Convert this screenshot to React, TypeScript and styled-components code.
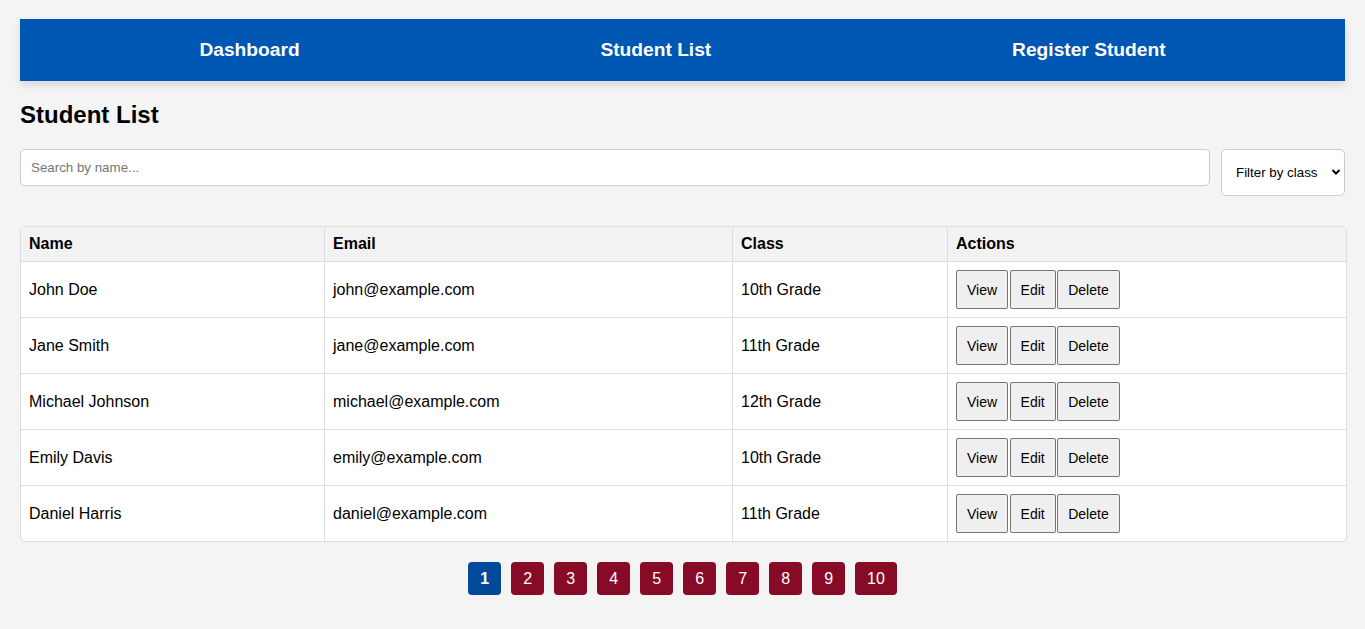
import React from "react";
import styled, { createGlobalStyle } from "styled-components";

const GlobalStyle = createGlobalStyle`
  html, body {
    margin: 0;
    padding: 0;
    background: #f4f4f4;
    font-family: "Liberation Sans", Arial, sans-serif;
    color: #000;
  }
`;

const Page = styled.div`
  padding: 19px 20px 20px;
`;

const Nav = styled.nav`
  display: flex;
  justify-content: space-around;
  align-items: center;
  background: #0056b3;
  padding: 20px 29px;
  box-shadow: 0 4px 8px rgba(0, 0, 0, 0.12);
`;

const NavLink = styled.a`
  color: #fff;
  font-weight: bold;
  font-size: 19.2px;
  line-height: 22px;
  text-decoration: none;
  cursor: pointer;
`;

const Title = styled.h2`
  font-size: 24px;
  font-weight: bold;
  margin: 20px 0 20px;
  line-height: 28px;
`;

const Filters = styled.div`
  display: flex;
  align-items: flex-start;
  gap: 11px;
  margin-bottom: 30px;
`;

const SearchInput = styled.input`
  flex: 1;
  box-sizing: border-box;
  height: 37px;
  padding: 10px;
  border: 1px solid #ccc;
  border-radius: 5px;
  font-family: "Liberation Sans", Arial, sans-serif;
  font-size: 13.33px;
  background: #fff;
  outline: none;
  &::placeholder {
    color: #757575;
  }
`;

const SelectWrap = styled.div`
  position: relative;
  width: 124px;
  height: 47px;
`;

const Select = styled.select`
  appearance: none;
  box-sizing: border-box;
  width: 124px;
  height: 47px;
  padding: 0 20px 0 14px;
  border: 1px solid #ccc;
  border-radius: 5px;
  background: #fff;
  font-family: "Liberation Sans", Arial, sans-serif;
  font-size: 13.33px;
  color: #000;
  outline: none;
`;

const Chevron = styled.svg`
  position: absolute;
  right: 4px;
  top: 19px;
  pointer-events: none;
`;

const Table = styled.table`
  width: 100%;
  box-sizing: border-box;
  table-layout: fixed;
  border-collapse: separate;
  border-spacing: 0;
  border: 1px solid #ddd;
  border-radius: 5px;
  overflow: hidden;
  background: #fff;
`;

const Th = styled.th`
  background: #f2f2f2;
  text-align: left;
  font-weight: bold;
  font-size: 16px;
  line-height: 18px;
  padding: 8px;
  border-right: 1px solid #ddd;
  border-bottom: 1px solid #ddd;
  &:last-child {
    border-right: none;
  }
`;

const Td = styled.td`
  font-size: 16px;
  line-height: 18px;
  padding: 8px;
  border-right: 1px solid #ddd;
  border-bottom: 1px solid #ddd;
  vertical-align: middle;
  &:last-child {
    border-right: none;
  }
  tr:last-child > & {
    border-bottom: none;
  }
`;

const Actions = styled.div`
  display: flex;
  gap: 1.5px;
`;

const ActionButton = styled.button`
  box-sizing: border-box;
  height: 39px;
  padding: 0 10px;
  border: 1px solid #767676;
  border-radius: 2px;
  background: #efefef;
  font-family: "Liberation Sans", Arial, sans-serif;
  font-size: 14px;
  color: #000;
  cursor: pointer;
`;

const Pagination = styled.div`
  display: flex;
  justify-content: center;
  gap: 10px;
  margin-top: 20px;
`;

const PageButton = styled.button<{ $active?: boolean }>`
  height: 33px;
  min-width: 33px;
  padding: 0 12px;
  border: none;
  border-radius: 4px;
  background: ${(p) => (p.$active ? "#004a99" : "#870b26")};
  color: #fff;
  font-family: "Liberation Sans", Arial, sans-serif;
  font-size: 16px;
  font-weight: ${(p) => (p.$active ? "bold" : "normal")};
  cursor: pointer;
`;

const students = [
  { name: "John Doe", email: "john@example.com", cls: "10th Grade" },
  { name: "Jane Smith", email: "jane@example.com", cls: "11th Grade" },
  { name: "Michael Johnson", email: "michael@example.com", cls: "12th Grade" },
  { name: "Emily Davis", email: "emily@example.com", cls: "10th Grade" },
  { name: "Daniel Harris", email: "daniel@example.com", cls: "11th Grade" },
];

export default function App() {
  return (
    <>
      <GlobalStyle />
      <Page>
        <Nav>
          <NavLink>Dashboard</NavLink>
          <NavLink>Student List</NavLink>
          <NavLink>Register Student</NavLink>
        </Nav>
        <Title>Student List</Title>
        <Filters>
          <SearchInput placeholder="Search by name..." />
          <SelectWrap>
            <Select defaultValue="">
              <option value="">Filter by class</option>
              <option value="10">10th Grade</option>
              <option value="11">11th Grade</option>
              <option value="12">12th Grade</option>
            </Select>
            <Chevron width="10" height="8" viewBox="0 0 10 8">
              <path d="M1.5 2 L5 5.5 L8.5 2" fill="none" stroke="#000" strokeWidth="2" />
            </Chevron>
          </SelectWrap>
        </Filters>
        <Table>
          <colgroup>
            <col style={{ width: 304 }} />
            <col style={{ width: 408 }} />
            <col style={{ width: 215 }} />
            <col style={{ width: 398 }} />
          </colgroup>
          <thead>
            <tr>
              <Th>Name</Th>
              <Th>Email</Th>
              <Th>Class</Th>
              <Th>Actions</Th>
            </tr>
          </thead>
          <tbody>
            {students.map((s) => (
              <tr key={s.email}>
                <Td>{s.name}</Td>
                <Td>{s.email}</Td>
                <Td>{s.cls}</Td>
                <Td>
                  <Actions>
                    <ActionButton>View</ActionButton>
                    <ActionButton>Edit</ActionButton>
                    <ActionButton>Delete</ActionButton>
                  </Actions>
                </Td>
              </tr>
            ))}
          </tbody>
        </Table>
        <Pagination>
          {Array.from({ length: 10 }, (_, i) => (
            <PageButton key={i} $active={i === 0}>
              {i + 1}
            </PageButton>
          ))}
        </Pagination>
      </Page>
    </>
  );
}
